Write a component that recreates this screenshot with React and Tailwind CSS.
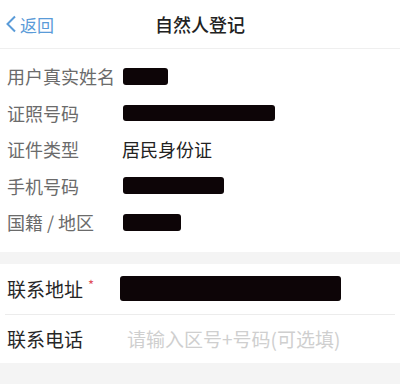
const font = { fontFamily: '"Noto Sans CJK SC", "Noto Sans", sans-serif' }

const Redact = ({ w, h }) => (
  <div className="bg-[#0d0507] rounded-[3px] shrink-0" style={{ width: w, height: h }} />
)

const InfoRow = ({ label, children }) => (
  <div className="flex items-center h-[36.5px]">
    <div className="w-[123px] shrink-0 pl-[7px] text-[18px] text-[#6b6b6b] leading-none whitespace-nowrap">{label}</div>
    <div className="flex items-center">{children}</div>
  </div>
)

const App = () => {
  return (
    <div className="w-[400px] h-[384px] bg-white overflow-hidden" style={font}>
      {/* header */}
      <div className="relative flex items-center justify-center h-[49px] border-b border-[#efefef]">
        <div className="absolute left-[5px] top-0 h-full flex items-center gap-[3px] text-[#5a9bd8]">
          <svg width="12" height="18" viewBox="0 0 12 18" fill="none">
            <path d="M10 1.5 L2.5 9 L10 16.5" stroke="currentColor" strokeWidth="2" />
          </svg>
          <span className="text-[17px] leading-none">返回</span>
        </div>
        <span className="text-[18px] font-medium text-[#222] leading-none">自然人登记</span>
      </div>

      {/* info section */}
      <div className="pt-[9px] pb-[11px]">
        <InfoRow label="用户真实姓名">
          <Redact w={45} h={17} />
        </InfoRow>
        <InfoRow label="证照号码">
          <Redact w={152} h={16} />
        </InfoRow>
        <InfoRow label="证件类型">
          <span className="text-[18px] text-[#222] leading-none -ml-[1px]">居民身份证</span>
        </InfoRow>
        <InfoRow label="手机号码">
          <Redact w={101} h={17} />
        </InfoRow>
        <InfoRow label="国籍 / 地区">
          <Redact w={58} h={17} />
        </InfoRow>
      </div>

      <div className="h-[12px] bg-[#f4f4f4]" />

      {/* contact section */}
      <div className="flex items-center h-[50px]">
        <div className="w-[120px] shrink-0 pl-[7px] flex items-start text-[19px] text-[#262626] leading-none">
          联系地址
          <span className="text-[#e0505a] text-[13px] ml-[5px] -mt-[1px]">*</span>
        </div>
        <Redact w={221} h={25} />
      </div>
      <div className="mx-[5px] h-px bg-[#ececec]" />
      <div className="flex items-center h-[48px]">
        <div className="w-[127px] shrink-0 pl-[7px] text-[19px] text-[#262626] leading-none">联系电话</div>
        <span className="text-[19px] text-[#cfcfcf] leading-none whitespace-nowrap">请输入区号+号码(可选填)</span>
      </div>
      <div className="h-[22px] bg-[#f4f4f4]" />
    </div>
  )
}

export default App
